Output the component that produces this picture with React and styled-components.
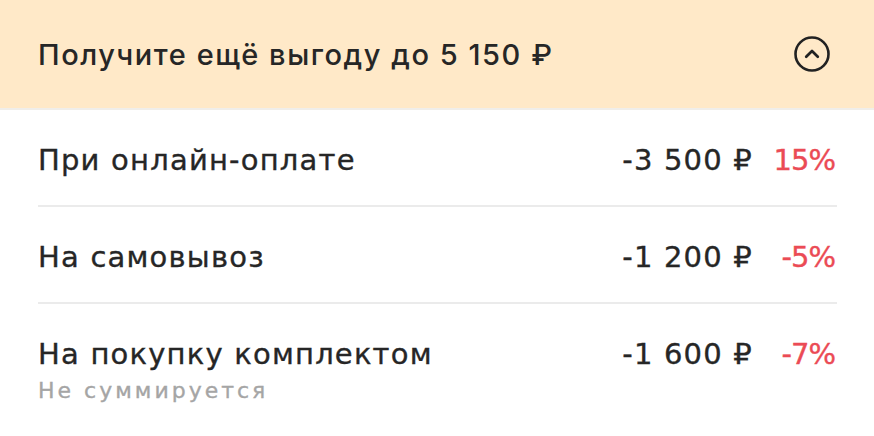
import React from 'react';
import styled, { createGlobalStyle } from 'styled-components';

const GlobalStyle = createGlobalStyle`
    html, body {
        margin: 0;
        padding: 0;
        background: #ffffff;
    }
`;

const rows = [
    { title: 'При онлайн-оплате', amount: '-3 500 ₽', percent: '15%' },
    { title: 'На самовывоз', amount: '-1 200 ₽', percent: '-5%' },
    { title: 'На покупку комплектом', amount: '-1 600 ₽', percent: '-7%', note: 'Не суммируется' },
];

function App() {
    return (
        <>
            <GlobalStyle />
            <Card>
                <Header>
                    <HeaderTitle>Получите ещё выгоду до 5 150 ₽</HeaderTitle>
                    <ToggleIcon width="38" height="38" viewBox="0 0 38 38">
                        <circle cx="19" cy="19" r="16.5" fill="none" stroke="#222" strokeWidth="2.6" />
                        <path d="M13.2 21.8 L19 16 L24.8 21.8" fill="none" stroke="#222" strokeWidth="2.7" strokeLinecap="round" strokeLinejoin="round" />
                    </ToggleIcon>
                </Header>
                <List>
                    {rows.map((row, i) => (
                        <Row key={row.title} last={i === rows.length - 1}>
                            <Info>
                                <RowTitle>{row.title}</RowTitle>
                                {row.note && <Note>{row.note}</Note>}
                            </Info>
                            <Amount>{row.amount}</Amount>
                            <Percent>{row.percent}</Percent>
                        </Row>
                    ))}
                </List>
            </Card>
        </>
    );
}

const Card = styled.div`
    width: 874px;
    height: 436px;
    background: #ffffff;
    overflow: hidden;
`;

const Header = styled.div`
    display: flex;
    align-items: center;
    justify-content: space-between;
    height: 110px;
    padding: 0 43px 0 38px;
    background-color: #ffe9c8;
    border-bottom: 2px solid #f0eeea;
    box-sizing: border-box;
`;

const HeaderTitle = styled.div`
    font-family: 'Inter', 'Roboto', sans-serif;
    font-size: 29px;
    font-weight: 500;
    color: #262626;
    letter-spacing: 1.55px;
`;

const ToggleIcon = styled.svg`
    display: block;
`;

const List = styled.div`
    display: flex;
    flex-direction: column;
    padding: 0 37px 0 38px;
`;

const Row = styled.div`
    display: flex;
    align-items: flex-start;
    padding: ${(props) => (props.last ? '33px 0 0' : '33px 0 28px')};
    border-bottom: ${(props) => (props.last ? 'none' : '2px solid #ebebeb')};
    font-family: 'DejaVu Sans', 'Inter', sans-serif;
    letter-spacing: 1.2px;
    -webkit-text-stroke: 0.35px currentColor;
`;

const Info = styled.div`
    display: flex;
    flex-direction: column;
    flex: 1;
`;

const RowTitle = styled.div`
    font-size: 29px;
    line-height: 34px;
    color: #262626;
`;

const Note = styled.div`
    margin-top: 6px;
    font-size: 22px;
    line-height: 28px;
    letter-spacing: 3px;
    color: #a5a5a5;
`;

const Amount = styled.div`
    font-size: 29px;
    line-height: 34px;
    color: #262626;
`;

const Percent = styled.div`
    width: 82px;
    padding-right: 2px;
    text-align: right;
    font-size: 29px;
    line-height: 34px;
    letter-spacing: -1px;
    color: #eb4b55;
`;

export default App;
